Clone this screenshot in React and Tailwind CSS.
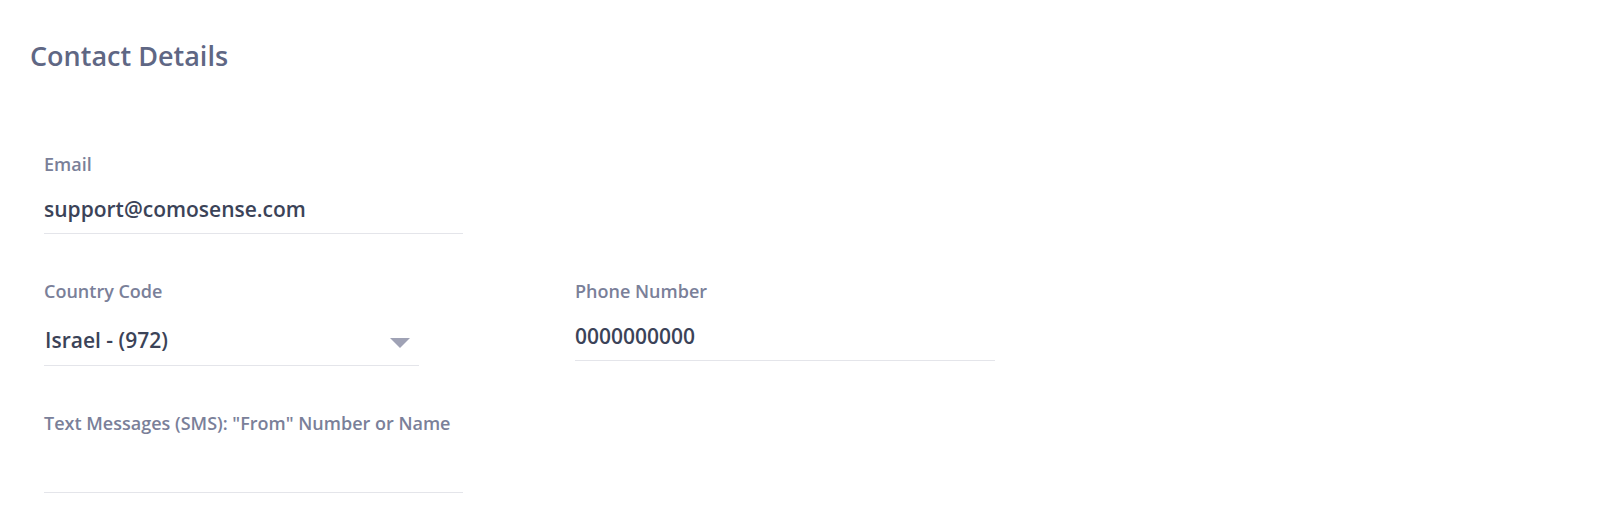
import React from 'react';

const font = { fontFamily: '"Open Sans", "Noto Sans", sans-serif' };

const Label = ({ children }) => (
  <div className="text-[18px] leading-[24px] font-semibold text-[#7a8099]">{children}</div>
);

const TextField = ({ label, value, width = 'w-[419px]' }) => (
  <div className={width}>
    <Label>{label}</Label>
    <div className="mt-[18px] h-[39px] box-content border-b border-[#e4e5ea]">
      <div className="h-[30px] text-[21px] leading-[30px] font-semibold text-[#3b4358]">{value}</div>
    </div>
  </div>
);

const SelectField = ({ label, value }) => (
  <div className="w-[375px]">
    <Label>{label}</Label>
    <div className="mt-[17px] flex items-center justify-between border-b border-[#e4e5ea] pt-[5px] pb-[10px] pl-[1px] pr-[9px]">
      <span className="h-[30px] text-[21px] leading-[30px] font-semibold text-[#3b4358]">{value}</span>
      <svg width="20" height="10" viewBox="0 0 20 10" className="mt-[6px]">
        <path d="M0 0 L20 0 L10 10 Z" fill="#9fa2b5" />
      </svg>
    </div>
  </div>
);

export default function App() {
  return (
    <div className="min-h-[516px] bg-white pl-[30px] pt-[37px]" style={font}>
      <h1 className="text-[27px] leading-[38px] font-semibold text-[#5f6784]">Contact Details</h1>

      <div className="mt-[77px] ml-[14px] grid grid-cols-[419px_420px] gap-x-[112px] gap-y-[45px]">
        <TextField label="Email" value="support@comosense.com" />
        <div />
        <SelectField label="Country Code" value="Israel - (972)" />
        <TextField label="Phone Number" value="0000000000" width="w-[420px]" />
        <TextField label={'Text Messages (SMS): "From" Number or Name'} value="" />
      </div>
    </div>
  );
}
